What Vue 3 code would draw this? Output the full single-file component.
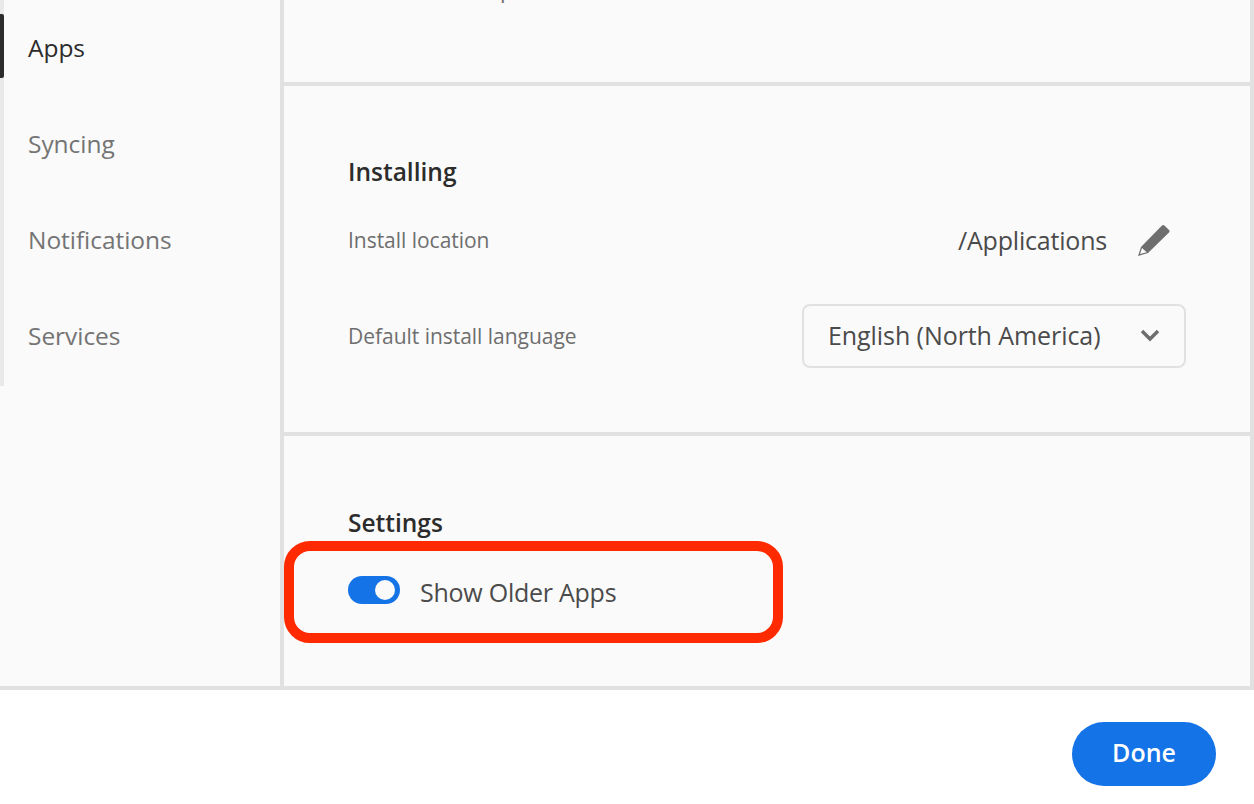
<script setup>
const navItems = [
  { label: 'Apps', active: true },
  { label: 'Syncing', active: false },
  { label: 'Notifications', active: false },
  { label: 'Services', active: false },
]
</script>

<template>
  <div class="window">
    <div class="body">
      <nav class="sidebar">
        <ul class="nav">
          <li v-for="item in navItems" :key="item.label" class="nav-item" :class="{ active: item.active }">
            {{ item.label }}
          </li>
        </ul>
      </nav>
      <main class="content">
        <section class="sec sec-top"><p class="clipped">Updates</p></section>
        <section class="sec sec-install">
          <h2 class="title">Installing</h2>
          <div class="row row-loc">
            <span class="label">Install location</span>
            <span class="loc">
              <span class="value">/Applications</span>
              <svg class="pencil" width="34" height="34" viewBox="0 0 34 34">
                <path fill="#6e6e6e" d="M1 33L4 24 25 2.500c.8-.8 1.600-.8 2.400 0l4.600 4.600c.8.800.8 1.600 0 2.400L11 30z" />
                <path fill="#fafafa" d="M3 31l2-6 4.700 4.300z" />
              </svg>
            </span>
          </div>
          <div class="row row-lang">
            <span class="label">Default install language</span>
            <div class="select">
              <span class="value value-select">English (North America)</span>
              <svg width="20" height="14" viewBox="0 0 20 14"><path d="M2 3l8 8 8-8" fill="none" stroke="#6e6e6e" stroke-width="3.400" /></svg>
            </div>
          </div>
        </section>
        <section class="sec sec-settings">
          <h2 class="title">Settings</h2>
          <div class="toggle-row">
            <span class="toggle"><span class="knob"></span></span>
            <span class="toggle-label">Show Older Apps</span>
            <span class="highlight"></span>
          </div>
        </section>
      </main>
    </div>
    <footer class="footer">
      <button class="done">Done</button>
    </footer>
  </div>
</template>

<style scoped>
.window {
  width: 1254px;
  height: 804px;
  display: flex;
  flex-direction: column;
  overflow: hidden;
  background: #fff;
  font-family: "Open Sans", "Noto Sans", sans-serif;
  color: #4b4b4b;
}
.body {
  height: 686px;
  display: flex;
  background: #fafafa;
}
.sidebar {
  width: 280px;
  flex: none;
}
.nav {
  list-style: none;
  margin: 0;
  padding: 0;
  width: 4px;
  height: 386px;
  background: #e9e9e9;
  position: relative;
}
.nav-item {
  height: 96px;
  width: 270px;
  padding: 0 0 1px 28px;
  box-sizing: border-box;
  display: flex;
  align-items: center;
  font-size: 24.5px;
  letter-spacing: -0.05px;
  color: #747474;
  white-space: nowrap;
  position: relative;
}
.nav-item.active {
  color: #2c2c2c;
}
.nav-item.active::before {
  content: "";
  position: absolute;
  left: 0;
  top: 14px;
  width: 4px;
  height: 64px;
  border-radius: 0 2px 2px 0;
  background: #2c2c2c;
}
.content {
  flex: 1;
  min-width: 0;
  display: flex;
  flex-direction: column;
  border-left: 4px solid #e1e1e1;
  border-right: 4px solid #e1e1e1;
}
.sec {
  box-sizing: border-box;
  padding: 0 64px;
  overflow: hidden;
}
.sec-top {
  height: 86px;
  border-bottom: 4px solid #e1e1e1;
}
.clipped {
  margin: -26px 0 0 136px;
  font-size: 22px;
  color: #6e6e6e;
}
.sec-install {
  height: 350px;
  padding-top: 68px;
  border-bottom: 4px solid #e1e1e1;
}
.sec-settings {
  flex: 1;
  padding-top: 69px;
}
.title {
  margin: 0;
  font-size: 24.5px;
  line-height: 36px;
  font-weight: 600;
  color: #2c2c2c;
}
.row {
  display: flex;
  justify-content: space-between;
  align-items: center;
}
.row-loc {
  height: 48px;
  margin-top: 26px;
  padding-right: 15px;
}
.row-lang {
  margin-top: 40px;
}
.label {
  font-size: 21px;
  letter-spacing: -0.03px;
  color: #6e6e6e;
}
.loc {
  display: flex;
  align-items: center;
  gap: 30px;
}
.value {
  font-size: 25px;
  letter-spacing: -0.2px;
  color: #4b4b4b;
}
.value-select {
  letter-spacing: -0.07px;
}
.select {
  box-sizing: border-box;
  width: 384px;
  height: 64px;
  padding: 0 24px 2px 24px;
  border: 2px solid #e1e1e1;
  border-radius: 8px;
  display: flex;
  align-items: center;
  justify-content: space-between;
}
.toggle-row {
  position: relative;
  display: flex;
  align-items: center;
  gap: 20px;
  margin-top: 31px;
  height: 36px;
}
.toggle {
  width: 52px;
  height: 28px;
  border-radius: 14px;
  background: #1473e6;
  position: relative;
}
.knob {
  position: absolute;
  right: 5px;
  top: 4px;
  width: 20px;
  height: 20px;
  border-radius: 50%;
  background: #fafafa;
}
.toggle-label {
  font-size: 25px;
  letter-spacing: -0.25px;
  color: #4b4b4b;
  padding-top: 4px;
}
.highlight {
  position: absolute;
  left: -64px;
  top: -31px;
  width: 499px;
  height: 102px;
  box-sizing: border-box;
  border: 10px solid #ff2a00;
  border-radius: 26px;
}
.footer {
  flex: 1;
  border-top: 4px solid #e1e1e1;
  display: flex;
  justify-content: flex-end;
  align-items: flex-start;
  padding: 32px 38px 0 0;
}
.done {
  width: 144px;
  height: 64px;
  padding: 0 0 4px;
  border: none;
  border-radius: 32px;
  background: #1473e6;
  color: #fff;
  font: 600 25px "Open Sans", "Noto Sans", sans-serif;
}
</style>
